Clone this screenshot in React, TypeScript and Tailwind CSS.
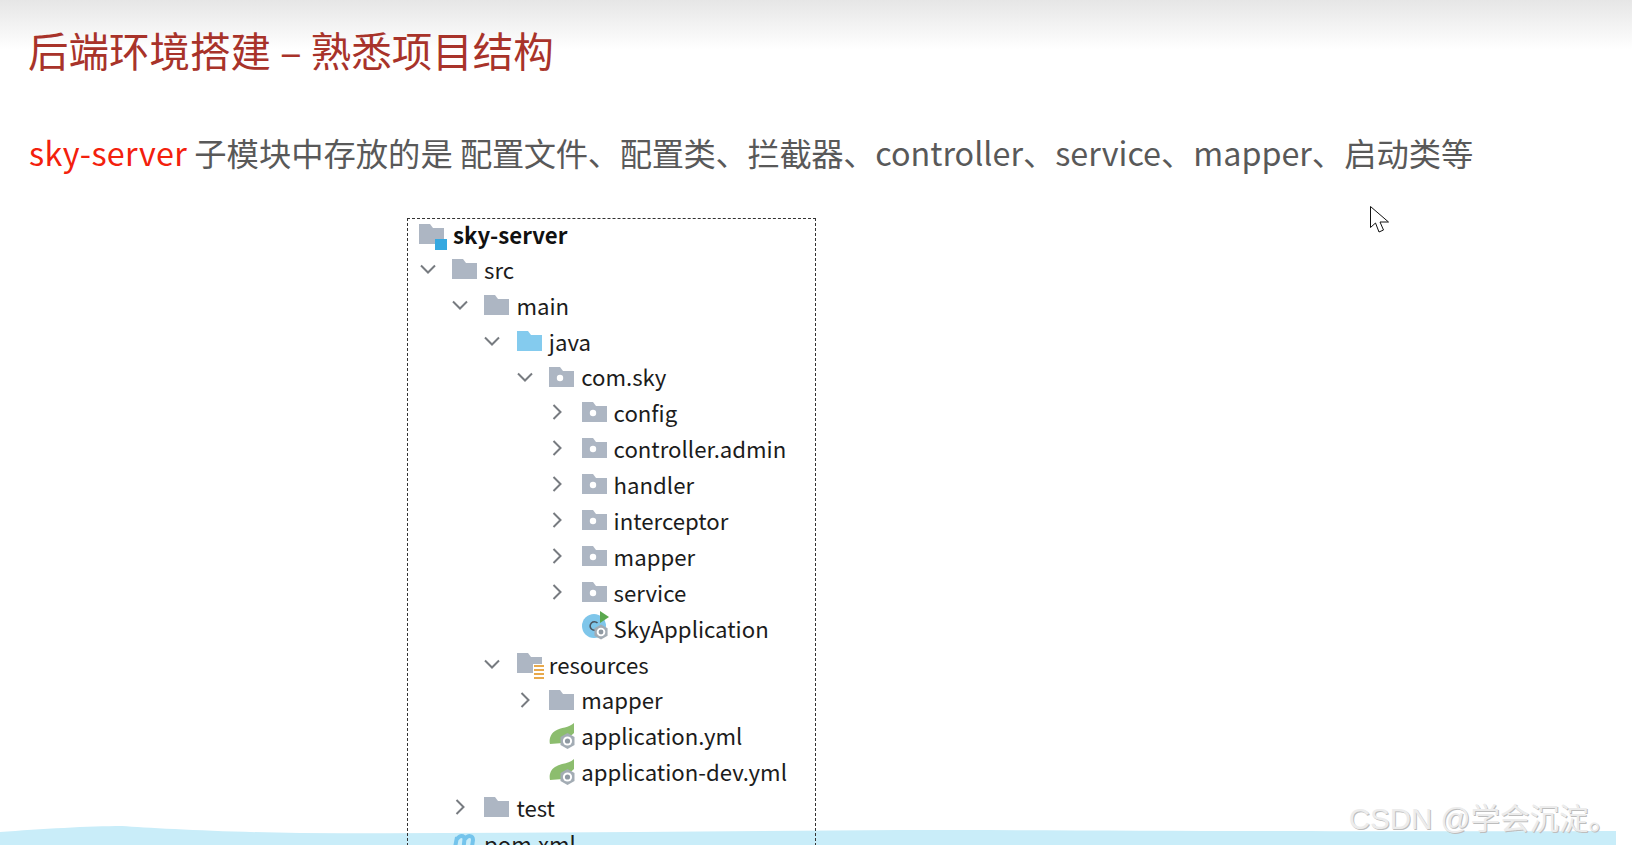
const FONT = "font-['Noto_Sans_CJK_SC','Noto_Sans',sans-serif]";

type Icon = "module" | "folder" | "source" | "package" | "app" | "resources" | "spring" | "maven";
type Row = { depth: number; open?: boolean; icon: Icon; label: string; bold?: boolean };

const rows: Row[] = [
  { depth: 0, open: true, icon: "folder", label: "src" },
  { depth: 1, open: true, icon: "folder", label: "main" },
  { depth: 2, open: true, icon: "source", label: "java" },
  { depth: 3, open: true, icon: "package", label: "com.sky" },
  { depth: 4, open: false, icon: "package", label: "config" },
  { depth: 4, open: false, icon: "package", label: "controller.admin" },
  { depth: 4, open: false, icon: "package", label: "handler" },
  { depth: 4, open: false, icon: "package", label: "interceptor" },
  { depth: 4, open: false, icon: "package", label: "mapper" },
  { depth: 4, open: false, icon: "package", label: "service" },
  { depth: 4, icon: "app", label: "SkyApplication" },
  { depth: 2, open: true, icon: "resources", label: "resources" },
  { depth: 3, open: false, icon: "folder", label: "mapper" },
  { depth: 3, icon: "spring", label: "application.yml" },
  { depth: 3, icon: "spring", label: "application-dev.yml" },
  { depth: 1, open: false, icon: "folder", label: "test" },
  { depth: 0, icon: "maven", label: "pom.xml" },
];

function Chevron({ open }: { open: boolean }) {
  return (
    <svg width="16" height="16" viewBox="0 0 16 16" fill="none" stroke="#777b80" strokeWidth="2">
      <path d={open ? "M1 4.500 8 11.500 15 4.500" : "M4.500 1 11.500 8 4.500 15"} />
    </svg>
  );
}

function Gear({ x, y, r = 8 }: { x: number; y: number; r?: number }) {
  return (
    <g transform={`translate(${x} ${y}) scale(${r / 8})`}>
      <path d="M0-8 7-4V4L0 8-7 4V-4Z" fill="#a3acb4" />
      <circle r="4.600" fill="#fff" />
      <circle r="2.600" fill="#8f99a2" />
    </g>
  );
}

const FOLDER = "M0 0H11L14 4H25V20H0Z";

function TreeIcon({ name }: { name: Icon }) {
  if (name === "app") {
    return (
      <svg className="-mt-[4px]" width="27" height="29" viewBox="0 0 27 29">
        <circle cx="12" cy="15" r="12" fill="#7fc6ea" />
        <path d="M15.500 12A4.300 4.300 0 1 0 15.500 18" fill="none" stroke="#4b5560" strokeWidth="1.600" />
        <path d="M18 0 27 6 18 12Z" fill="#5aa84e" />
        <Gear x={19} y={21} r={7.500} />
      </svg>
    );
  }
  if (name === "spring") {
    return (
      <svg className="mt-[2px]" width="26" height="26" viewBox="0 0 26 26">
        <path d="M25 0C20 5 12 4 6 8 1 11 0 17 1 21 5 21 10 20 14 20L25 10Z" fill="#8cbd6e" />
        <Gear x={18.500} y={18} />
      </svg>
    );
  }
  if (name === "maven") {
    return (
      <svg width="26" height="20" viewBox="0 0 26 20" fill="none" stroke="#74c4ec" strokeWidth="4">
        <path d="M2 20 5 4M5 6C8 2 12 2 12.500 6L11 20M13 6C16 2 21 2 21 7L19 20" />
      </svg>
    );
  }
  if (name === "module") {
    return (
      <svg width="28" height="26" viewBox="0 0 28 26">
        <path d="M0 0H11L14 4H25V16H16V20H0Z" fill="#adb6c3" />
        <rect x="16" y="15" width="12" height="11" fill="#35a8e0" />
      </svg>
    );
  }
  if (name === "resources") {
    return (
      <svg className="mt-[5px]" width="28" height="26" viewBox="0 0 28 26">
        <path d="M0 0H11L14 4H25V11H16V20H0Z" fill="#adb6c3" />
        <path d="M17 13H27M17 17H27M17 21H27M17 25H27" stroke="#e8a94c" strokeWidth="2" />
      </svg>
    );
  }
  return (
    <svg width="25" height="20" viewBox="0 0 25 20">
      <path d={FOLDER} fill={name === "source" ? "#84cbee" : "#adb6c3"} />
      {name === "package" && <circle cx="11" cy="11" r="3.200" fill="#fff" />}
    </svg>
  );
}

function TreeRow({ row }: { row: Row }) {
  return (
    <div className="flex h-[35.9px] items-center" style={{ paddingLeft: row.depth * 32.4 }}>
      <div className="flex w-[44px] shrink-0 items-center justify-center pr-[5px]">
        {row.open !== undefined && <Chevron open={row.open} />}
      </div>
      <div className="flex w-[32px] shrink-0 items-center">
        <TreeIcon name={row.icon} />
      </div>
      <span className="text-[22.2px] leading-none whitespace-nowrap text-[#1c1c1c]">{row.label}</span>
    </div>
  );
}

export default function App() {
  return (
    <div className={`relative flex h-[845px] w-[1632px] flex-col overflow-hidden bg-white ${FONT}`}>
      {/* wave at the foot of the slide, sits behind the tree */}
      <svg className="absolute bottom-0 left-0" width="1616" height="22" viewBox="0 0 1616 22" preserveAspectRatio="none">
        <path
          d="M0 9C40 6 90 3 122 3 150 5 220 9 300 10 500 11 700 8 900 7 1100 7 1300 9 1616 8V22H0Z"
          fill="#c9edf9"
        />
      </svg>

      <header className="h-[50px] shrink-0 bg-gradient-to-b from-[#e6e6e6] to-white pl-[28px]">
        <h1 className="pt-[25px] text-[40.5px] leading-[50px] font-normal whitespace-nowrap text-[#a8332a]">
          后端环境搭建 – 熟悉项目结构
        </h1>
      </header>

      <p className="relative mt-[78px] pl-[29px] text-[32.3px] leading-[48px] whitespace-nowrap text-[#595959]">
        <span className="tracking-[0.35px] text-[#f3200c]">sky-server</span> 子模块中存放的是{" "}
        <span className="tracking-[-0.35px]">配置文件、配置类、拦截器、</span>controller、service、mapper、启动类等
      </p>

      <main className="relative mt-[42px] ml-[407px] flex w-[409px] flex-1 flex-col border-x border-t border-dashed border-[#333]">
        <div className="-mt-[3px] flex h-[35.9px] shrink-0 items-center pl-[11px]">
          <div className="mt-[6px] w-[34px] shrink-0">
            <TreeIcon name="module" />
          </div>
          <span className="text-[22.2px] leading-none font-bold text-[#111]">sky-server</span>
        </div>
        <div className="-mt-px flex flex-col">
          {rows.map((row) => (
            <TreeRow key={row.label + row.depth} row={row} />
          ))}
        </div>
      </main>

      {/* mouse cursor */}
      <svg className="absolute top-[205px] left-[1369px]" width="21" height="29" viewBox="0 0 21 29" fill="#fff" stroke="#111" strokeWidth="1">
        <path d="M1.500 1.500V22.500L6.500 18 10 27 14.500 25 11 17H19.500Z" />
      </svg>

      <div className="absolute right-[14px] bottom-[12px] font-['Liberation_Sans','Noto_Sans_CJK_SC',sans-serif] text-[29.5px] leading-none whitespace-nowrap text-[#ececec] [text-shadow:1px_1px_0_#bdbdbd]">
        CSDN @学会沉淀。
      </div>
    </div>
  );
}
